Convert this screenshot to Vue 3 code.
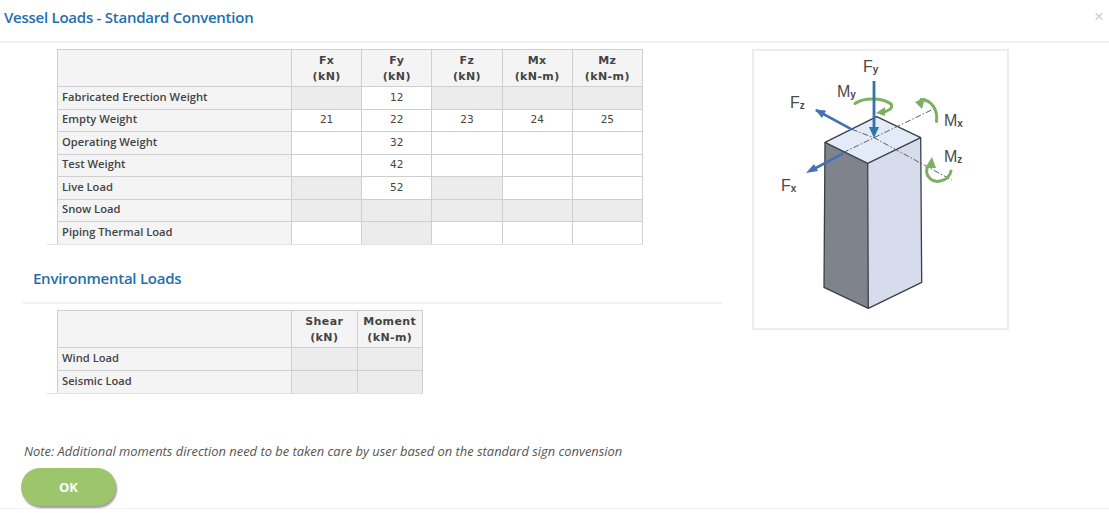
<script setup>
const loadCols = [
  { name: 'Fx', unit: '(kN)' }, { name: 'Fy', unit: '(kN)' }, { name: 'Fz', unit: '(kN)' },
  { name: 'Mx', unit: '(kN-m)' }, { name: 'Mz', unit: '(kN-m)' }
]
const D = null
const loadRows = [
  { label: 'Fabricated Erection Weight', cells: [D, '12', D, D, D] },
  { label: 'Empty Weight', cells: ['21', '22', '23', '24', '25'] },
  { label: 'Operating Weight', cells: ['', '32', '', '', ''] },
  { label: 'Test Weight', cells: ['', '42', '', '', ''] },
  { label: 'Live Load', cells: [D, '52', D, '', ''] },
  { label: 'Snow Load', cells: [D, D, D, D, D] },
  { label: 'Piping Thermal Load', cells: ['', D, '', '', ''] }
]
const envCols = [{ name: 'Shear', unit: '(kN)' }, { name: 'Moment', unit: '(kN-m)' }]
const envRows = [
  { label: 'Wind Load', cells: [D, D] },
  { label: 'Seismic Load', cells: [D, D] }
]
</script>

<template>
  <div class="dialog">
    <header class="head">
      <h1>Vessel Loads - Standard Convention</h1>
      <span class="close">×</span>
    </header>
    <div class="main">
      <div class="left">
        <div class="twrap">
          <table class="grid load">
            <thead>
              <tr>
                <th class="lab"></th>
                <th v-for="c in loadCols" :key="c.name">{{ c.name }}<br />{{ c.unit }}</th>
              </tr>
            </thead>
            <tbody>
              <tr v-for="r in loadRows" :key="r.label">
                <td class="lab">{{ r.label }}</td>
                <td v-for="(v, i) in r.cells" :key="i" :class="{ off: v === null }">{{ v }}</td>
              </tr>
            </tbody>
          </table>
        </div>
        <h2>Environmental Loads</h2>
        <div class="twrap env-wrap">
          <table class="grid env">
            <thead>
              <tr>
                <th class="lab"></th>
                <th v-for="c in envCols" :key="c.name">{{ c.name }}<br />{{ c.unit }}</th>
              </tr>
            </thead>
            <tbody>
              <tr v-for="r in envRows" :key="r.label">
                <td class="lab">{{ r.label }}</td>
                <td v-for="(v, i) in r.cells" :key="i" class="off"></td>
              </tr>
            </tbody>
          </table>
        </div>
      </div>
      <div class="figure">
        <svg width="253" height="277" viewBox="754 51 253 277">
          <polygon points="825,142.3 867.7,163.3 868.3,308.3 824,287.3" fill="#7f838c" />
          <polygon points="867.7,163.3 920.7,137.7 921.7,282.3 868.3,308.3" fill="#d6dcec" />
          <polygon points="876.7,116.7 920.7,137.7 867.7,163.3 825,142.3" fill="#e3eaf8" />
          <g fill="none" stroke="#3a3f47" stroke-width="1.3" stroke-linejoin="round">
            <polygon points="876.7,116.7 920.7,137.7 867.7,163.3 825,142.3" />
            <path d="M825 142.3L824 287.3L868.3 308.3L921.7 282.3L920.7 137.7M867.7 163.3L868.3 308.3" />
          </g>
          <g fill="none" stroke="#5a6068" stroke-width="1" stroke-dasharray="6 2 1.5 2">
            <path d="M843 152.7L874 137.7L935 108.3" />
            <path d="M851.7 129.3L874 137.7L951.7 180" />
          </g>
          <g fill="none" stroke="#7eb063" stroke-width="3" stroke-linecap="round">
            <path d="M855 103.5C863 97.5 882 97 891 104C894 108 888 111.5 881 112.5" />
            <path d="M936.5 121.5C938 110 932 100 921 99.5" />
            <path d="M927 168C925 176 932 183 940 181C946 180 950 176 951 171" />
          </g>
          <g fill="#7eb063">
            <polygon points="876,113 885,107 885,116" />
            <polygon points="915,102 925,97.5 922,109" />
            <polygon points="932,157 936,168 925,168" />
          </g>
          <path d="M816 110L851.7 129.3" stroke="#4472b4" stroke-width="2.6" />
          <polygon points="815,109.5 826,110.5 822,118" fill="#4472b4" />
          <path d="M843.3 153.3L812 170" stroke="#4472b4" stroke-width="2.6" />
          <polygon points="806,173 814,164 818,171" fill="#4472b4" />
          <path d="M874 81V130" stroke="#2e75a8" stroke-width="2.8" />
          <polygon points="874,138 869,127 879,127" fill="#2e75a8" />
          <g class="lbl">
            <text x="863" y="72">F<tspan class="sub" dy="1">y</tspan></text>
            <text x="790" y="108">F<tspan class="sub" dy="1">z</tspan></text>
            <text x="837" y="97">M<tspan class="sub" dy="1">y</tspan></text>
            <text x="944" y="126">M<tspan class="sub" dy="1">x</tspan></text>
            <text x="944" y="162">M<tspan class="sub" dy="1">z</tspan></text>
            <text x="781" y="191">F<tspan class="sub" dy="1">x</tspan></text>
          </g>
        </svg>
      </div>
    </div>
    <p class="note">Note: Additional moments direction need to be taken care by user based on the standard sign convension</p>
    <div class="foot">
      <button class="ok" type="button">OK</button>
    </div>
  </div>
</template>

<style scoped>
.dialog {
  width: 1109px;
  height: 513px;
  overflow: hidden;
  background: #fff;
  font-family: "Open Sans", "Noto Sans", sans-serif;
  color: #333;
  display: flex;
  flex-direction: column;
}
.head {
  height: 41px;
  border-bottom: 2px solid #f1f1f1;
  display: flex;
  justify-content: space-between;
  align-items: flex-start;
  padding: 0 4px;
  flex: none;
}
h1 {
  margin: 7px 0 0;
  font-size: 15px;
  line-height: 20px;
  font-weight: 600;
  letter-spacing: -0.25px;
  color: #1f6fae;
}
.close {
  font-family: "Liberation Sans", sans-serif;
  font-size: 17px;
  line-height: 20px;
  margin: 7px 1px 0 0;
  color: #cfcfcf;
}
.main {
  display: flex;
  padding-top: 6px;
  height: 341px;
  flex: none;
}
.left {
  width: 722px;
  flex: none;
}
.twrap {
  margin-left: 47px;
  padding-left: 10px;
  width: 596px;
  box-sizing: border-box;
  border-bottom: 1px solid #e2e2e2;
}
.env-wrap {
  width: 376px;
  margin-top: 6px;
}
.grid {
  border-collapse: collapse;
  table-layout: fixed;
  width: 585px;
  border: 1px solid #cfcfcf;
  border-bottom: 0;
}
.env {
  width: 365px;
}
.grid th, .grid td {
  box-sizing: border-box;
  border: 1px solid #cfcfcf;
  padding: 0;
  text-align: center;
  font-family: "DejaVu Sans", sans-serif;
  font-size: 10.5px;
  color: #444;
}
.grid tbody tr:last-child td {
  border-bottom: 0;
}
.grid th {
  background: #f4f4f4;
  height: 37px;
  padding-top: 1px;
  line-height: 16px;
  font-size: 11px;
  font-weight: 700;
  letter-spacing: 0.4px;
}
.grid td {
  height: 22.5px;
  line-height: 18px;
  padding-bottom: 2px;
}
.grid .lab {
  width: 234px;
  background: #f4f4f4;
  text-align: left;
  padding-left: 4px;
  font-family: "Open Sans", sans-serif;
  font-size: 11.2px;
  font-weight: 600;
  color: #444;
}
.load th:not(.lab) {
  width: 70.2px;
}
.env th:not(.lab) {
  width: 65.5px;
}
.grid .off {
  background: #ececec;
}
h2 {
  margin: 23px 0 0 23px;
  padding: 0 0 14px 10px;
  border-bottom: 2px solid #f1f1f1;
  font-size: 15px;
  line-height: 20px;
  font-weight: 600;
  letter-spacing: -0.25px;
  color: #1f6fae;
}
.figure {
  margin-left: 30px;
  width: 257px;
  height: 281px;
  box-sizing: border-box;
  border: 2px solid #ededed;
  flex: none;
}
.figure svg {
  display: block;
}
.lbl text {
  font-family: "Liberation Sans", sans-serif;
  font-size: 16px;
  fill: #4a4a4a;
}
.lbl .sub {
  font-size: 10px;
  font-weight: 700;
}
.note {
  margin: 0 0 0 24px;
  font-size: 12.9px;
  line-height: 16px;
  font-style: italic;
  color: #555;
  height: 16px;
  padding-top: 53px;
  flex: none;
  box-sizing: content-box;
}
.foot {
  flex: 1;
  border-bottom: 1px solid #f4f4f4;
  margin-bottom: 4px;
  padding: 9px 0 0 21px;
}
.ok {
  display: block;
  width: 95px;
  height: 38px;
  border: 0;
  border-radius: 19px;
  background: #9cc56c;
  box-shadow: 1px 2px 2px rgba(0, 0, 0, 0.4);
  color: #fff;
  font-family: "Open Sans", sans-serif;
  font-size: 13px;
  font-weight: 700;
  padding: 0;
}
</style>
